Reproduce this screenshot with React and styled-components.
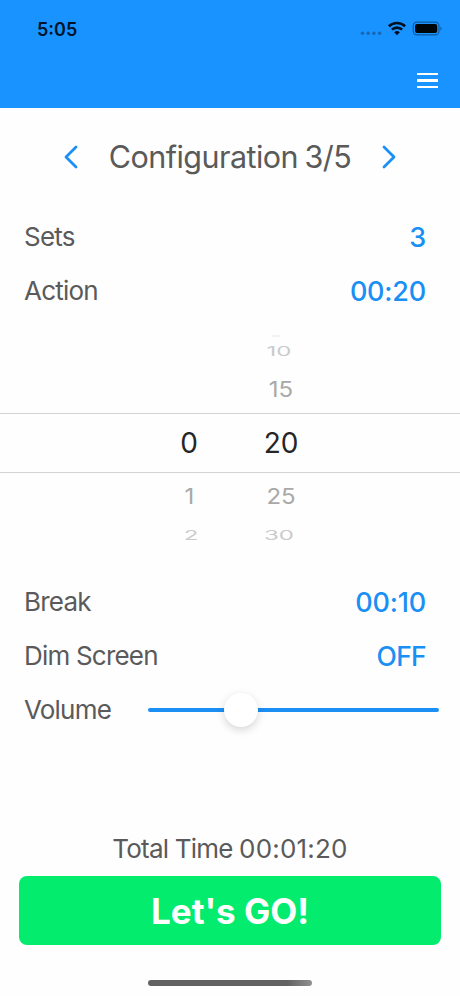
import React, { useState } from "react";
import styled, { createGlobalStyle } from "styled-components";

const PICKER_ROWS = [
  { minutes: "", seconds: "10", height: 27, size: 24, squash: 0.54, color: "#cbcbcb", shift: -2, drop: 1 },
  { minutes: "", seconds: "15", height: 49, size: 24, squash: 0.92, color: "#a9a9a9", drop: 1 },
  { minutes: "0", seconds: "20", height: 60, size: 28, squash: 1, color: "#262626", selected: true },
  { minutes: "1", seconds: "25", height: 48, size: 24, squash: 0.92, color: "#a9a9a9", minuteShift: 0.5 },
  { minutes: "2", seconds: "30", height: 28, size: 24, squash: 0.54, color: "#cbcbcb", shift: -2, minuteShift: 2, drop: 1 },
];

const SettingRow = ({ label, value, tight }) => (
  <Row>
    <Label>{label}</Label>
    <Value $tight={tight}>{value}</Value>
  </Row>
);

const PickerLine = ({ row }) => (
  <PickerRow $height={row.height} $selected={row.selected} $drop={row.drop}>
    <PickerValue $row={row} $shift={row.minuteShift}>
      {row.minutes}
    </PickerValue>
    <PickerValue $row={row} $shift={row.shift}>
      {row.seconds}
    </PickerValue>
  </PickerRow>
);

const App = () => {
  const [volume] = useState(32);

  return (
    <Screen>
      <GlobalStyle />
      <Header>
        <StatusBar>
          <Clock>5:05</Clock>
          <svg width="84" height="18" viewBox="0 0 84 18">
            <g fill="#1a67b1">
              <circle cx="4.5" cy="13.2" r="1.7" />
              <circle cx="10.2" cy="13.2" r="1.7" />
              <circle cx="15.9" cy="13.2" r="1.7" />
              <circle cx="21.6" cy="13.2" r="1.7" />
            </g>
            <g fill="none" stroke="#001020" strokeWidth="2.6">
              <path d="M30.9 6.3a11.6 11.6 0 0 1 16.2 0" />
              <path d="M33.9 9.7a7.2 7.2 0 0 1 10.2 0" />
            </g>
            <path d="M36.2 12.3a4.2 4.2 0 0 1 5.6 0L39 15.2z" fill="#001020" />
            <rect x="55.2" y="2.1" width="25.8" height="12.8" rx="3.8" fill="none" stroke="#0f5aa0" strokeWidth="1.1" />
            <rect x="57" y="4" width="22.2" height="9" rx="2" fill="#000509" />
            <path d="M82.4 6.5c1.5.6 1.5 3.6 0 4.2z" fill="#0f5aa0" />
          </svg>
        </StatusBar>
        <NavBar>
          <MenuButton aria-label="Menu">
            <MenuLine />
            <MenuLine />
            <MenuLine />
          </MenuButton>
        </NavBar>
      </Header>

      <TitleRow>
        <ArrowButton aria-label="Previous">
          <svg width="16" height="26" viewBox="0 0 16 26">
            <path d="M13 3 3 13l10 10" />
          </svg>
        </ArrowButton>
        <Title>Configuration 3/5</Title>
        <ArrowButton aria-label="Next">
          <svg width="16" height="26" viewBox="0 0 16 26">
            <path d="M3 3 13 13 3 23" />
          </svg>
        </ArrowButton>
      </TitleRow>

      <SettingRow label="Sets" value="3" />
      <SettingRow label="Action" value="00:20" />

      <Picker>
        <PickerEdge />
        {PICKER_ROWS.map((row) => (
          <PickerLine key={row.seconds} row={row} />
        ))}
      </Picker>

      <SettingRow label="Break" value="00:10" />
      <SettingRow label="Dim Screen" value="OFF" tight />
      <VolumeRow>
        <Label>Volume</Label>
        <Track>
          <Thumb style={{ left: `${volume}%` }} />
        </Track>
      </VolumeRow>

      <Footer>
        <TotalTime>
          Total Time <Duration>00:01:20</Duration>
        </TotalTime>
        <GoButton>Let's GO!</GoButton>
        <HomeIndicator />
      </Footer>
    </Screen>
  );
};

export default App;


const GlobalStyle = createGlobalStyle`
  * {
    box-sizing: border-box;
  }

  body {
    margin: 0;
    background-color: #fff;
    font-family: "Inter", "Liberation Sans", sans-serif;
  }

  button {
    padding: 0;
    border: none;
    background: none;
    font-family: inherit;
    cursor: pointer;
  }
`;

const Screen = styled.div`
  display: flex;
  flex-direction: column;
  width: 460px;
  height: 996px;
  overflow: hidden;
  background-color: #fefefe;
`;

const Header = styled.header`
  flex: none;
  height: 108px;
  background-color: #1893ff;
`;

const StatusBar = styled.div`
  display: flex;
  align-items: center;
  justify-content: space-between;
  height: 58px;
  padding: 0 18px 0 37px;
`;

const Clock = styled.span`
  font-size: 18px;
  font-weight: 600;
  color: #001328;
`;

const NavBar = styled.div`
  display: flex;
  justify-content: flex-end;
  padding: 15px 22px 0 0;
`;

const MenuButton = styled.button`
  display: flex;
  flex-direction: column;
  gap: 4px;
`;

const MenuLine = styled.span`
  width: 21px;
  height: 2.4px;
  background-color: #fff;
`;

const TitleRow = styled.div`
  display: flex;
  flex: none;
  align-items: center;
  justify-content: space-between;
  height: 98px;
  margin-bottom: 4px;
  padding: 0 63px;
`;

const Title = styled.h1`
  margin: 0;
  padding-bottom: 1px;
  font-size: 30.5px;
  font-weight: 400;
  letter-spacing: -0.55px;
  word-spacing: -1.5px;
  white-space: nowrap;
  color: #5a5a5a;
`;

const ArrowButton = styled.button`
  display: flex;

  path {
    fill: none;
    stroke: #1a8ff8;
    stroke-width: 2.8;
    stroke-linecap: round;
    stroke-linejoin: round;
  }
`;

const Row = styled.div`
  display: flex;
  flex: none;
  align-items: center;
  justify-content: space-between;
  height: 54px;
  padding: 0 34px 0 24px;
`;

const VolumeRow = styled(Row)`
  padding-right: 21px;
`;

const Label = styled.span`
  padding-bottom: 1px;
  font-size: 26px;
  letter-spacing: -0.8px;
  color: #5a5a5a;
`;

const Value = styled.span`
  font-size: ${({ $tight }) => ($tight ? 26.5 : 27)}px;
  font-weight: 450;
  letter-spacing: ${({ $tight }) => ($tight ? -0.7 : -0.2)}px;
  color: #1a8ff4;
`;

const Picker = styled.div`
  flex: none;
  height: 257px;
  padding-top: 17px;
`;

const PickerEdge = styled.div`
  width: 8px;
  height: 2px;
  margin: 0 0 0 272px;
  background-color: #f3f3f3;
`;

const PickerRow = styled.div`
  display: grid;
  grid-template-columns: 92px 92px;
  align-items: center;
  justify-content: center;
  height: ${({ $height }) => $height}px;
  padding-top: ${({ $drop }) => ($drop ? $drop * 2 : 0)}px;
  padding-left: 10px;
  border: solid #d4d4d4;
  border-width: ${({ $selected }) => ($selected ? "1px 0" : "0")};
`;

const PickerValue = styled.span`
  font-size: ${({ $row }) => $row.size}px;
  line-height: 1;
  text-align: center;
  color: ${({ $row }) => $row.color};
  transform: translateX(${({ $shift }) => $shift || 0}px) scaleY(${({ $row }) => $row.squash});
`;

const Track = styled.div`
  position: relative;
  width: 291px;
  height: 4px;
  border-radius: 2px;
  background-color: #1c8ff4;
`;

const Thumb = styled.div`
  position: absolute;
  top: 50%;
  width: 34px;
  height: 34px;
  border-radius: 50%;
  background-color: #fff;
  box-shadow: 0 3px 8px rgba(0, 0, 0, 0.16);
  transform: translate(-50%, -50%);
`;

const Footer = styled.footer`
  display: flex;
  flex-direction: column;
  align-items: center;
  margin-top: auto;
  padding: 0 19px 10px;
`;

const TotalTime = styled.div`
  margin-bottom: 11px;
  font-size: 26px;
  line-height: 32px;
  letter-spacing: -0.8px;
  color: #5a5a5a;
`;

const Duration = styled.span`
  letter-spacing: 0.2px;
`;

const GoButton = styled.button`
  width: 100%;
  height: 69px;
  margin-bottom: 35px;
  border-radius: 8px;
  background-color: #03ec6e;
  font-size: 35px;
  font-weight: 700;
  color: #fff;
`;

const HomeIndicator = styled.div`
  width: 164px;
  height: 6px;
  border-radius: 3px;
  background: linear-gradient(90deg, #626262 85%, #909090);
`;
